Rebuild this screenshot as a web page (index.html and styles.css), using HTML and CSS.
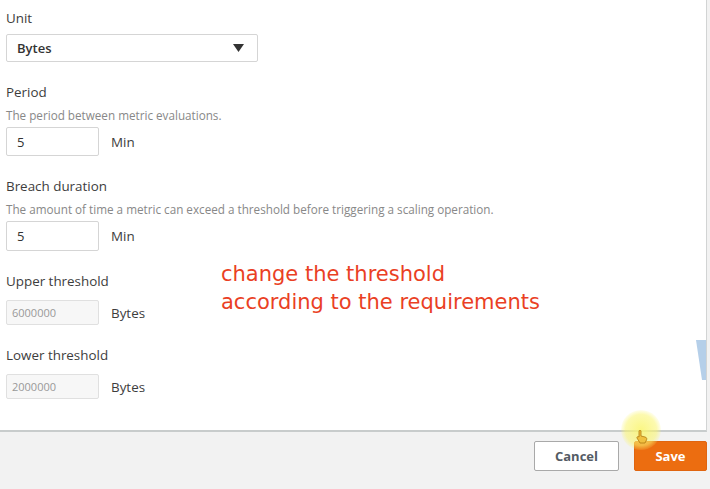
FILE: index.html
```html
<!DOCTYPE html>
<html>
<head>
<meta charset="utf-8">
<link rel="stylesheet" href="styles.css">
</head>
<body>
<div class="page">
  <div class="panel">
    <div class="form">
      <div class="field first">
        <div class="label">Unit</div>
        <div class="select">
          <span>Bytes</span>
          <svg class="caret" width="11" height="8" viewBox="0 0 11 8"><polygon points="0,0 11,0 5.5,8" fill="#333"/></svg>
        </div>
      </div>
      <div class="field">
        <div class="label">Period</div>
        <div class="desc">The period between metric evaluations.</div>
        <div class="row">
          <div class="input">5</div>
          <span class="unit">Min</span>
        </div>
      </div>
      <div class="field">
        <div class="label">Breach duration</div>
        <div class="desc">The amount of time a metric can exceed a threshold before triggering a scaling operation.</div>
        <div class="row">
          <div class="input tall">5</div>
          <span class="unit">Min</span>
        </div>
      </div>
      <div class="field">
        <div class="label gap">Upper threshold</div>
        <div class="row">
          <div class="input disabled">6000000</div>
          <span class="unit">Bytes</span>
        </div>
      </div>
      <div class="field">
        <div class="label gap">Lower threshold</div>
        <div class="row">
          <div class="input disabled">2000000</div>
          <span class="unit">Bytes</span>
        </div>
      </div>
    </div>
    <div class="note">change the threshold<br>according to the requirements</div>
    <svg class="blue" width="10" height="40" viewBox="0 0 10 40"><polygon points="0,0 10,0 10,40 6,40" fill="#b5cfe9"/></svg>
  </div>
  <div class="footer">
    <button class="btn cancel">Cancel</button>
    <button class="btn save">Save</button>
  </div>
  <div class="glow"></div>
  <svg class="cursor" width="12" height="14" viewBox="0 0 12 14"><path d="M3 1 C3 0 5 0 5 1 L5 6 L9 7 C11 7.5 11 9 10.5 10 L9 13 L4 13 L1 8 C0.5 7 2 6 3 7 Z" fill="#f0c040" stroke="#b07a10" stroke-width="0.8"/></svg>
</div>
</body>
</html>
```

FILE: styles.css
```css
* { box-sizing: border-box; }
html, body { margin: 0; padding: 0; }
body {
  background: #f2f2f2;
  font-family: "Open Sans", "Liberation Sans", sans-serif;
  width: 710px;
  height: 489px;
  overflow: hidden;
}
.page { position: relative; width: 710px; height: 489px; }
.panel {
  position: relative;
  width: 707px;
  height: 432px;
  background: #fff;
  border-right: 1px solid #d2d4d4;
  border-bottom: 2px solid #c8cccc;
}
.form { padding: 10px 0 0 6px; display: flex; flex-direction: column; }
.field { display: flex; flex-direction: column; margin-top: 22px; }
.field.first { margin-top: 0; }
.label {
  font-size: 13.4px;
  line-height: 16px;
  color: #3d3d3d;
  font-weight: 500;
}
.label.gap { margin-bottom: 11px; }
.select {
  margin-top: 8px;
  width: 252px;
  height: 28px;
  border: 1px solid #d5d5d5;
  border-radius: 2px;
  display: flex;
  align-items: center;
  justify-content: space-between;
  padding: 0 13px 0 10px;
  font-size: 13px;
  font-weight: 600;
  color: #333;
}
.desc {
  margin-top: 8px;
  margin-bottom: 5px;
  font-size: 11.7px;
  line-height: 14px;
  color: #888;
}
.row { display: flex; align-items: center; }
.input {
  width: 93px;
  height: 29px;
  border: 1px solid #d5d5d5;
  border-radius: 2px;
  display: flex;
  align-items: center;
  padding-left: 10px;
  font-size: 13px;
  color: #333;
}
.input.tall { height: 30px; }
.input.disabled {
  height: 25px;
  background: #f7f7f7;
  border-color: #e0e0e0;
  color: #999;
  font-size: 11px;
  padding-left: 5px;
}
.unit {
  margin-left: 12px;
  font-size: 13.4px;
  color: #3d3d3d;
  font-weight: 500;
}
.note {
  position: absolute;
  left: 221px;
  top: 260px;
  font-family: "DejaVu Sans", Verdana, sans-serif;
  font-size: 21px;
  line-height: 28px;
  color: #ea3f24;
}
.blue { position: absolute; right: 0; top: 340px; }
.footer {
  display: flex;
  justify-content: flex-end;
  gap: 15px;
  padding: 9px 3px 0 0;
}
.btn {
  height: 30px;
  font-family: "Open Sans", "Liberation Sans", sans-serif;
  font-size: 13px;
  font-weight: 700;
  border-radius: 2px;
  padding: 0;
  cursor: pointer;
}
.cancel { width: 85px; background: #fff; border: 1px solid #a9a9a9; color: #545b64; }
.save { width: 73px; background: #ec6d10; border: 1px solid #e06510; color: #fff; }
.glow {
  position: absolute;
  left: 621px;
  top: 410px;
  width: 40px;
  height: 40px;
  border-radius: 50%;
  background: radial-gradient(circle, rgba(250,245,110,0.85) 0%, rgba(250,245,110,0.55) 55%, rgba(250,245,110,0) 75%);
}
.cursor { position: absolute; left: 636px; top: 430px; }
```
